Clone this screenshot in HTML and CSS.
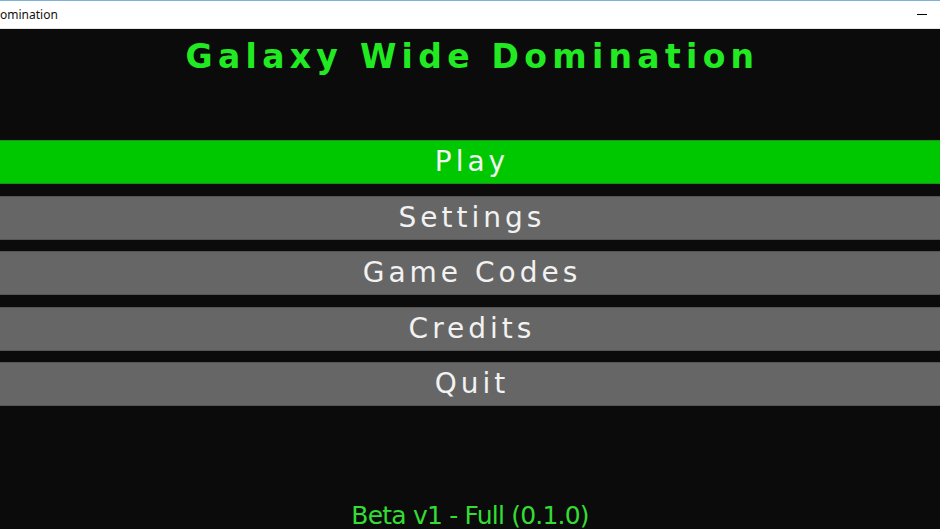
FILE: index.html
```html
<!DOCTYPE html>
<html>
<head>
<meta charset="utf-8">
<link rel="stylesheet" href="styles.css">
</head>
<body>
<div class="titlebar">
  <span class="wintitle">omination</span>
  <span class="minimize"></span>
</div>
<main class="game">
  <h1 class="title">Galaxy Wide Domination</h1>
  <nav class="menu">
    <div class="btn btn-active">Play</div>
    <div class="btn">Settings</div>
    <div class="btn">Game Codes</div>
    <div class="btn">Credits</div>
    <div class="btn">Quit</div>
  </nav>
  <div class="version">Beta v1 - Full (0.1.0)</div>
</main>
</body>
</html>
```
FILE: styles.css
```css
html, body {
  margin: 0;
  padding: 0;
  height: 100%;
  overflow: hidden;
}
body {
  background: #0b0b0b;
  display: flex;
  flex-direction: column;
}
.titlebar {
  height: 27px;
  background: #ffffff;
  border-top: 1px solid #7db3d8;
  border-bottom: 1px solid #e6e6e6;
  display: flex;
  align-items: center;
  justify-content: space-between;
  flex-shrink: 0;
}
.wintitle {
  font-family: "Noto Sans", sans-serif;
  font-size: 12px;
  color: #111;
  margin-left: 0;
}
.minimize {
  width: 10px;
  height: 1px;
  background: #000;
  margin-right: 13px;
}
.game {
  flex: 1;
  display: flex;
  flex-direction: column;
  font-family: "DejaVu Sans", sans-serif;
}
.title {
  margin: 0;
  padding-top: 5px;
  padding-left: 5px;
  height: 106px;
  text-align: center;
  font-weight: bold;
  font-size: 33px;
  letter-spacing: 5.3px;
  color: #22ea22;
  line-height: 46px;
}
.menu {
  display: flex;
  flex-direction: column;
  gap: 11.5px;
}
.btn {
  height: 42px;
  background: #666666;
  border-top: 1px solid #555;
  border-bottom: 1px solid #555;
  color: #f2f2f2;
  font-size: 28px;
  letter-spacing: 4px;
  padding-left: 4px;
  text-align: center;
  line-height: 42px;
}
.btn-active {
  background: #00c800;
  border-color: #1f8f1f;
}
.version {
  margin-top: auto;
  text-align: center;
  color: #33dd33;
  font-size: 25px;
  letter-spacing: -0.8px;
  line-height: 28px;
  margin-bottom: -1px;
}
```
